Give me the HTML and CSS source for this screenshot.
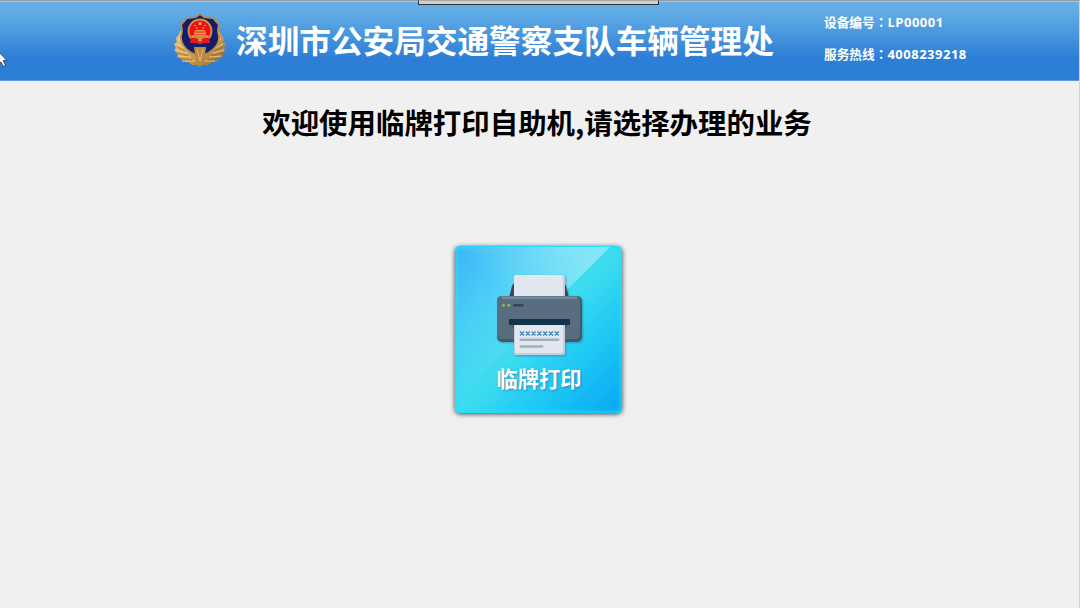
FILE: index.html
```html
<!DOCTYPE html>
<html lang="zh-CN">
  <head>
    <meta charset="UTF-8" />
    <meta name="viewport" content="width=device-width, initial-scale=1.0" />
    <title>临牌打印自助机</title>
    <link rel="stylesheet" href="styles.css">
  </head>
  <body>
    <div class="top-tab"></div>

    <header class="header">
      <svg class="emblem" viewBox="0 0 54 56">
        <defs>
          <linearGradient id="gold" x1="0" y1="0" x2="1" y2="1">
            <stop offset="0" stop-color="#edcf88" />
            <stop offset="0.5" stop-color="#cfa052" />
            <stop offset="1" stop-color="#946429" />
          </linearGradient>
        </defs>
        <!-- 松枝 -->
        <path d="M8 17L5 23L3 25L4 29L1 31L3 35L1 37L5 41L4 44L9 46L9 49L15 49L19 52L24 52L27 54L30 52L35 52L39 49L45 49L45 46L50 44L49 41L53 37L51 35L53 31L50 29L51 25L49 23L46 17Z" fill="url(#gold)" />
        <path d="M4 31L12 35M3 37L14 40M6 43L18 44M12 48L22 48M50 31L42 35M51 37L40 40M48 43L36 44M42 48L32 48M6 26L10 29M48 26L44 29" fill="none" stroke="#f0d59a" stroke-width="1.1" opacity="0.8" />
        <path d="M4 34L12 38M5 40L15 43M9 46L19 47M50 34L42 38M49 40L39 43M45 46L35 47" fill="none" stroke="#8a5c27" stroke-width="0.9" opacity="0.7" />
        <!-- 盾牌 -->
        <path d="M27 1L31 4Q36 5 40 5L46 12Q44 17 46 23Q47 36 27 44Q7 36 8 23Q10 17 8 12L14 5Q20 5 23 4Z" fill="#141c6c" stroke="#b98c48" stroke-width="1.8" />
        <path d="M21 34L33 34L32 43L27 51L22 43Z" fill="#b98a42" />
        <path d="M24 36L27 48L30 36" fill="none" stroke="#e0b868" stroke-width="1" />
        <!-- 国徽 -->
        <circle cx="27" cy="18" r="11.5" fill="#ee1218" stroke="#cf9540" stroke-width="1.8" />
        <path d="M18 22H36L34 27H20Z" fill="#d58a35" />
        <path d="M21 19.5H33V21.5H21ZM23 17H31L33 18.5H21Z" fill="#e8a545" />
        <circle cx="27" cy="10.5" r="1.6" fill="#f5c44c" />
        <circle cx="22" cy="12.5" r="0.8" fill="#f5c44c" />
        <circle cx="32" cy="12.5" r="0.8" fill="#f5c44c" />
        <circle cx="24" cy="15" r="0.8" fill="#f5c44c" />
        <circle cx="30" cy="15" r="0.8" fill="#f5c44c" />
        <path d="M18 25L23 25L27 27L31 25L36 25L37 30L31 30L27 31L23 30L17 30Z" fill="#e01a20" />
        <circle cx="27" cy="27" r="1.8" fill="#d99a40" />
      </svg>
      <h1 class="title">深圳市公安局交通警察支队车辆管理处</h1>
      <div class="info">
        <p><span class="label">设备编号<span class="colon" lang="zh-TW">：</span></span>LP00001</p>
        <p><span class="label">服务热线<span class="colon" lang="zh-TW">：</span></span>4008239218</p>
      </div>
    </header>

    <main class="main">
      <h2 class="welcome">欢迎使用临牌打印自助机,请选择办理的业务</h2>

      <a class="card" href="#">
        <svg class="printer" viewBox="0 0 88 84">
          <path d="M14 24L17 12Q18 9 21 9H67Q70 9 71 12L74 24Z" fill="#34495e" />
          <rect x="19" y="1" width="51" height="28" rx="1.5" fill="#c6cedd" />
          <rect x="19" y="1" width="49" height="28" rx="1.5" fill="#e1e6ef" />
          <rect x="2" y="22" width="85" height="46" rx="5" fill="#43586b" />
          <rect x="2" y="22" width="83" height="43" rx="4.5" fill="#5a6d7f" />
          <path d="M6 22.5H83L81 25H8Z" fill="#708ba3" />
          <circle cx="8.5" cy="31.3" r="1.5" fill="#83c14f" />
          <circle cx="13.7" cy="31.3" r="1.5" fill="#83c14f" />
          <rect x="18" y="30" width="10.5" height="2.6" rx="1.3" fill="#34475a" />
          <rect x="14" y="45" width="61" height="6" rx="0.8" fill="#12344b" />
          <path d="M17 51H72V54H17Z" fill="#485c6e" />
          <path d="M19 51H70V79Q70 81 68 81H21Q19 81 19 79Z" fill="#c5cedd" />
          <path d="M20 51H68V77Q68 79 66 79H22Q20 79 20 77Z" fill="#e1e6ef" />
          <path d="M25 57.5l4 4m0-4l-4 4M30.8 57.5l4 4m0-4l-4 4M36.6 57.5l4 4m0-4l-4 4M42.4 57.5l4 4m0-4l-4 4M48.2 57.5l4 4m0-4l-4 4M54 57.5l4 4m0-4l-4 4M59.8 57.5l4 4m0-4l-4 4" fill="none" stroke="#438cc0" stroke-width="1.3" />
          <rect x="24.5" y="64.5" width="40" height="2.6" rx="1.3" fill="#9eafbf" />
          <rect x="24.5" y="71.2" width="24" height="2.6" rx="1.3" fill="#9eafbf" />
        </svg>
        <span class="card-name">临牌打印</span>
      </a>
    </main>

    <svg class="cursor" viewBox="0 0 8 18">
      <path d="M-3 0L6.8 10.3L3.2 10.7L5.6 15.3L3.2 16.5L1 12L-3 15Z" fill="#fff" stroke="#1d2b40" stroke-width="0.8" />
    </svg>
  </body>
</html>
```

FILE: styles.css
```css
* {
  margin: 0;
  padding: 0;
  box-sizing: border-box;
}

body {
  height: 100vh;
  overflow: hidden;
  background: #f0f0f0;
  border-top: 1px solid #999;
  border-right: 1px solid #d2d2d2;
  font-family: "Noto Sans CJK SC", sans-serif;
}

.top-tab {
  position: absolute;
  top: 0;
  left: 418px;
  width: 241px;
  height: 5px;
  background: #d4d0c8;
  border: 1px solid #2b3540;
  border-top: 1px solid #aaa;
}

.header {
  display: flex;
  align-items: center;
  height: 80px;
  padding-left: 173px;
  padding-bottom: 2px;
  color: #fff;
  background: linear-gradient(#66b0e8 0%, #60abe5 15%, #2d7ed6 72%, #2d7ed6 100%);
  border-top: 1px solid #b9c3cb;
  border-bottom: 1px solid #5a9ae0;
}

.emblem {
  width: 54px;
  height: 56px;
  margin-top: 1px;
}

.title {
  width: 588px;
  margin-left: 9px;
  font-size: 31.65px;
  font-weight: bold;
  line-height: 48px;
  margin-top: -3px;
  white-space: nowrap;
}

.info {
  font-family: "Open Sans", "Noto Sans CJK SC", sans-serif;
  font-size: 13px;
  font-weight: bold;
  line-height: 31px;
  letter-spacing: 0.5px;
  margin-top: -5px;
}

.info .label {
  font-size: 12.7px;
  letter-spacing: 0;
}

/* 冒号居中显示 */
.info .colon {
  font-family: "Noto Sans CJK TC", sans-serif;
}

.main {
  display: flex;
  flex-direction: column;
  align-items: center;
  padding-right: 2px;
}

.welcome {
  margin: 20px 3px 0 0;
  font-size: 28.45px;
  line-height: 42px;
  color: #000;
}

.card {
  position: relative;
  display: flex;
  flex-direction: column;
  align-items: center;
  width: 167px;
  height: 167px;
  margin-top: 103px;
  padding-top: 28px;
  border-radius: 5px;
  color: #fff;
  text-decoration: none;
  background: linear-gradient(135deg, #25adf8 0%, #3ccdf5 28%, #3edcf0 50%, #1ec8f4 72%, #08a6f5 100%);
  box-shadow: 0 1px 5px rgba(0, 0, 0, 0.75), inset 0 0 4px 1px #1be2fb;
}

/* 左上角高光 */
.card::before {
  content: "";
  position: absolute;
  inset: 1px;
  border-radius: 4px;
  background: linear-gradient(45deg, rgba(255, 255, 255, 0.03) 10%, rgba(255, 255, 255, 0.1) 50%, rgba(255, 255, 255, 0.36) 85%);
  clip-path: polygon(0 0, 154px 0, 0 154px);
}

.printer {
  position: relative;
  width: 88px;
  height: 84px;
  filter: drop-shadow(1px 1px 1px rgba(20, 60, 90, 0.35));
}

.card-name {
  position: relative;
  margin-top: 4px;
  padding-left: 1px;
  font-size: 21.3px;
  font-weight: bold;
  line-height: 32px;
  text-shadow: 1px 1px 2px rgba(0, 70, 120, 0.45);
}

.cursor {
  position: absolute;
  top: 50px;
  left: 0;
  width: 8px;
  height: 18px;
}
```
